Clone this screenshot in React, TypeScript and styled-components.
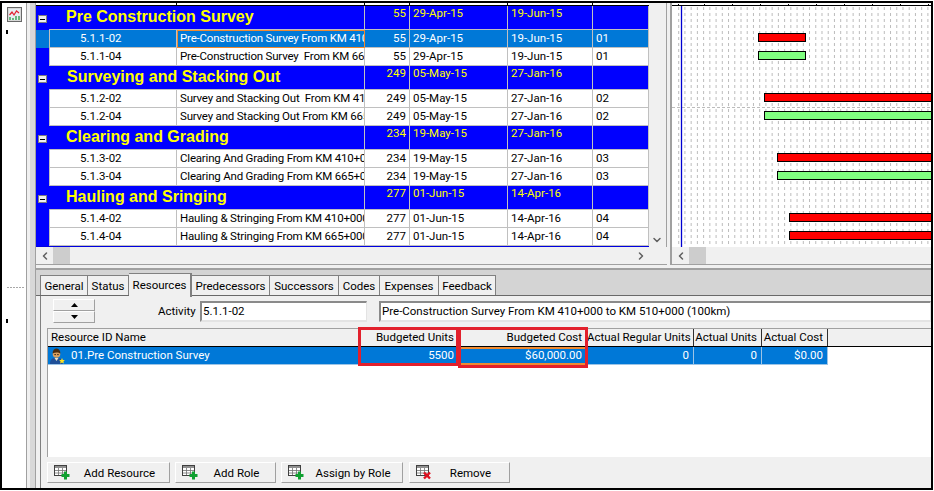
import React from 'react';
import styled, { createGlobalStyle } from 'styled-components';
import { ChevronDown, ChevronLeft, ChevronRight } from 'lucide-react';

const GlobalStyle = createGlobalStyle`
  html, body {
    margin: 0;
    padding: 0;
    background: #fff;
  }
  body {
    font-family: Roboto, "Liberation Sans", Arial, sans-serif;
    font-size: 11.5px;
    color: #000;
  }
  * { box-sizing: border-box; }
`;

const COLUMNS = '13px 128px 188px 45px 98px 85px 56px';
const RES_COLUMNS = '311px 100px 128px 107px 68px 66px 1fr';

const Frame = styled.div`
  display: flex;
  width: 933px;
  height: 489px;
  margin-top: 1px;
  border: 2px solid #000;
  overflow: hidden;
`;

const Rail = styled.div`
  position: relative;
  display: flex;
  flex-direction: column;
  width: 25px;
  border-right: 1px solid #a0a0a0;
  padding: 4px 0 0 5px;
`;

const RailMark = styled.div<{ $top: number }>`
  width: 2px;
  height: 4px;
  margin-top: ${(p) => p.$top}px;
  margin-left: -1px;
  background: #000;
`;

const RailDots = styled.div`
  width: 18px;
  height: 1px;
  margin-top: 253px;
  background: repeating-linear-gradient(90deg, #a8a8a8 0 2px, transparent 2px 3px);
`;

const Sash = styled.div`
  width: 9px;
  background: linear-gradient(90deg, #f0f0f0 0 3px, #d8d8d8 3px 8px, #a0a0a0 8px);
`;

const Main = styled.div`
  display: flex;
  flex-direction: column;
  width: 895px;
`;

const TopPane = styled.div`
  display: flex;
  height: 262px;
`;

const TablePane = styled.div`
  display: flex;
  flex-direction: column;
  width: 631px;
`;

const TableWrap = styled.div`
  display: flex;
  height: 244px;
`;

const Grid = styled.div`
  width: 613px;
`;

const TickStrip = styled.div`
  display: grid;
  grid-template-columns: ${COLUMNS};
  height: 3px;
  border-bottom: 1px solid #000;
  span { border-right: 1px solid #000; }
`;

const Row = styled.div<{ $group?: boolean; $selected?: boolean }>`
  display: grid;
  grid-template-columns: ${COLUMNS};
  height: ${(p) => (p.$group ? 24 : 18)}px;
  background: ${(p) => (p.$group ? '#0000ff' : p.$selected ? '#0078d7' : '#fff')};
  color: ${(p) => (p.$group ? '#ffff00' : p.$selected ? '#fff' : '#000')};
`;

const Gutter = styled.div<{ $selected?: boolean }>`
  background: ${(p) => (p.$selected ? '#0078d7' : '#0000ff')};
  border-right: 1px solid ${(p) => (p.$selected ? '#0078d7' : '#0000ff')};
`;

const GroupGutter = styled.div`
  position: relative;
  padding: 9px 0 0 2px;
`;

const Toggle = styled.div`
  display: flex;
  align-items: center;
  justify-content: center;
  width: 9px;
  height: 8px;
  background: #f0f0f0;
  border: 1px solid #808080;
  &::after {
    content: '';
    width: 5px;
    height: 1px;
    background: #000;
  }
`;

const GroupTitle = styled.div<{ $indent: number }>`
  grid-column: span 2;
  padding-left: ${(p) => p.$indent}px;
  font-family: "Liberation Sans", Arial, sans-serif;
  font-size: 16px;
  font-weight: 700;
  line-height: 21px;
  white-space: nowrap;
  border-right: 1px solid #c0c0c0;
  border-bottom: 1px solid #c0c0c0;
`;

const Cell = styled.div<{ $right?: boolean; $pad: number; $first?: boolean; $active?: boolean; $top?: boolean }>`
  height: 100%;
  overflow: hidden;
  white-space: pre;
  line-height: ${(p) => (p.$top ? '15px' : '17px')};
  text-align: ${(p) => (p.$right ? 'right' : 'left')};
  padding: ${(p) => (p.$right ? `0 ${p.$pad}px 0 0` : `0 0 0 ${p.$pad}px`)};
  border-right: 1px solid #c0c0c0;
  border-bottom: 1px solid #c0c0c0;
  border-left: ${(p) => (p.$first ? '1px solid #c0c0c0' : 'none')};
  ${(p) =>
    p.$active &&
    `
    outline: 1px solid #f08a30;
    outline-offset: -1px;
    padding-left: 3px;
    border-right-color: #f08a30;
    border-bottom-color: #f08a30;
  `}
`;

const NameCell = styled(Cell)`
  letter-spacing: -0.2px;
`;

const BlueEnd = styled.div`
  height: 1px;
  background: #0000e0;
`;

const VScroll = styled.div`
  display: flex;
  flex-direction: column;
  align-items: center;
  justify-content: flex-end;
  width: 18px;
  padding: 0 1px 1px 0;
  background: #f0f0f0;
  border-right: 1px solid #a0a0a0;
  color: #606060;
`;

const HScroll = styled.div<{ $inset?: number }>`
  display: flex;
  align-items: center;
  height: 18px;
  padding-right: ${(p) => p.$inset ?? 0}px;
  background: #f0f0f0;
  border-bottom: 1px solid #a0a0a0;
  color: #606060;
`;

const ArrowBox = styled.div`
  display: flex;
  align-items: center;
  justify-content: center;
  width: 17px;
  height: 17px;
`;

const Thumb = styled.div`
  width: 17px;
  height: 17px;
  background: #cdcdcd;
`;

const ScrollRest = styled.div`
  flex: 1;
`;

const Splitter = styled.div`
  width: 5px;
  background: linear-gradient(90deg, #f0f0f0 0 3px, #a0a0a0 3px);
`;

const GanttPane = styled.div`
  display: flex;
  flex-direction: column;
  width: 259px;
`;

const GanttChart = styled.svg`
  display: block;
  width: 259px;
  height: 244px;
`;

const Details = styled.div`
  display: flex;
  flex-direction: column;
  height: 223px;
  padding-top: 3px;
  background: #f0f0f0;
`;

const TabStrip = styled.div`
  display: flex;
  align-items: flex-end;
  height: 28px;
  padding-left: 4px;
  background: #d4d4d4;
  border-top: 2px solid #a0a0a0;
  border-bottom: 1px solid #696969;
`;

const Tab = styled.div<{ $width: number; $active?: boolean }>`
  position: relative;
  width: ${(p) => p.$width}px;
  height: ${(p) => (p.$active ? 24 : 20)}px;
  margin-bottom: ${(p) => (p.$active ? -2 : 0)}px;
  padding-top: ${(p) => (p.$active ? 4 : 3)}px;
  line-height: 14px;
  text-align: center;
  background: #f0f0f0;
  border-top: 1px solid #808080;
  border-right: ${(p) => (p.$active ? '2px solid #808080' : '1px solid #808080')};
  &:first-child { border-left: 1px solid #808080; }
`;

const Body = styled.div`
  display: flex;
  flex-direction: column;
  flex: 1;
  margin-left: 4px;
  padding-left: 6px;
  border-left: 1px solid #808080;
`;

const ActivityRow = styled.div`
  display: flex;
  align-items: center;
  height: 27px;
  padding-top: 3px;
`;

const Spinner = styled.div`
  display: flex;
  flex-direction: column;
  width: 42px;
  height: 24px;
  margin-left: 6px;
`;

const SpinButton = styled.div`
  display: flex;
  align-items: center;
  justify-content: center;
  flex: 1;
  background: #f0f0f0;
  border-top: 1px solid #fff;
  border-left: 1px solid #fff;
  border-right: 1px solid #a0a0a0;
  border-bottom: 1px solid #a0a0a0;
`;

const ActivityLabel = styled.label`
  margin-left: 63px;
  width: 42px;
  color: #000;
`;

const Field = styled.div<{ $width?: number; $gap: number }>`
  flex: ${(p) => (p.$width ? 'none' : 1)};
  width: ${(p) => (p.$width ? `${p.$width}px` : 'auto')};
  height: 21px;
  margin-top: 1px;
  margin-left: ${(p) => p.$gap}px;
  padding-left: 1px;
  line-height: 17px;
  white-space: nowrap;
  overflow: hidden;
  background: #fff;
  border-top: 2px solid #8a8a8a;
  border-left: 2px solid #8a8a8a;
  border-right: 1px solid #e3e3e3;
  border-bottom: 2px solid #e3e3e3;
`;

const ResTable = styled.div`
  position: relative;
  height: 129px;
  margin-top: 5px;
  background: #fff;
  border-top: 1px solid #a0a0a0;
  border-left: 1px solid #a0a0a0;
`;

const ResHeader = styled.div`
  display: grid;
  grid-template-columns: ${RES_COLUMNS};
  height: 18px;
  background: #f0f0f0;
  border-bottom: 1px solid #000;
`;

const ResHead = styled.div<{ $left?: boolean }>`
  padding: ${(p) => (p.$left ? '0 0 0 3px' : '0 4px 0 0')};
  line-height: 17px;
  text-align: ${(p) => (p.$left ? 'left' : 'right')};
  white-space: nowrap;
  border-right: 1px solid #303030;
`;

const HeadFill = styled.div`
  background: #f0f0f0;
`;

const ResRow = styled.div`
  display: grid;
  grid-template-columns: ${RES_COLUMNS};
  height: 18px;
  color: #fff;
`;

const ResCell = styled.div<{ $active?: boolean }>`
  padding-right: 4px;
  line-height: 17px;
  text-align: right;
  background: #0078d7;
  border-right: 1px solid #9cc4e6;
  border-bottom: 1px solid #9cc4e6;
  ${(p) => p.$active && 'outline: 2px solid #f08a30; outline-offset: -2px;'}
`;

const ResName = styled(ResCell)`
  display: flex;
  align-items: center;
  gap: 6px;
  padding-left: 2px;
  text-align: left;
`;

const Callout = styled.div<{ $left: number; $width: number; $height: number }>`
  position: absolute;
  top: -2px;
  left: ${(p) => p.$left}px;
  width: ${(p) => p.$width}px;
  height: ${(p) => p.$height}px;
  border: 3px solid #e2202c;
  pointer-events: none;
`;

const ButtonRow = styled.div`
  display: flex;
  padding-top: 5px;
`;

const ActionButton = styled.div<{ $width: number; $gap: number }>`
  display: flex;
  align-items: center;
  width: ${(p) => p.$width}px;
  height: 21px;
  margin-right: ${(p) => p.$gap}px;
  padding-left: 6px;
  background: #f0f0f0;
  border-top: 1px solid #fff;
  border-left: 1px solid #fff;
  border-right: 1px solid #a0a0a0;
  border-bottom: 1px solid #a0a0a0;
`;

const ActionLabel = styled.span`
  flex: 1;
  text-align: center;
`;

const ChartIcon = () => (
  <svg width="15" height="15" viewBox="0 0 15 15">
    <rect x="0.5" y="0.5" width="14" height="14" fill="#d8d8d8" stroke="#686868" />
    <rect x="2" y="2" width="11" height="11" fill="#e6edf2" />
    <path d="M2.5 8 5 5l2 3 2.5-4L12 6" fill="none" stroke="#e02030" strokeWidth="1.2" />
    <path d="M3 13v-3M6 13v-2M9 13V9M12 13v-4" stroke="#30a050" strokeWidth="1.4" />
  </svg>
);

const PersonIcon = () => (
  <svg width="15" height="16" viewBox="0 0 15 16">
    <path d="M0 16c0-5 2-6 6.5-6s6 1 6 6z" fill="#1f4f98" />
    <path d="M4.5 10h4l-2 3z" fill="#f0e0c0" />
    <circle cx="6.5" cy="6" r="3.8" fill="#d8a060" />
    <path d="M2.6 5.5C2.6 2 4.5 0.5 6.5 0.5s3.9 1.5 3.9 5C8.6 4 5 4 2.6 5.5z" fill="#4a2c10" />
    <path d="M4.4 6.6h1.5M7.2 6.6h1.5" stroke="#201008" strokeWidth="0.9" />
    <path d="M12 10l.9 1.9 2 .2-1.5 1.3.5 2-1.9-1-1.9 1 .5-2-1.5-1.3 2-.2z" fill="#ffe020" />
  </svg>
);

const TableIcon = ({ remove }: { remove?: boolean }) => (
  <svg width="16" height="15" viewBox="0 0 16 15">
    <rect x="0.5" y="0.5" width="12" height="10" fill="#fff" stroke="#404040" />
    <rect x="1" y="1" width="11" height="2" fill="#909090" />
    <path d="M1 5.5h11M1 8h11M4.5 3v7M8.5 3v7" stroke="#707070" strokeWidth="0.8" />
    {remove ? (
      <path d="M8 7.5l6 6M14 7.5l-6 6" stroke="#e01020" strokeWidth="2.4" />
    ) : (
      <path d="M11.5 6.5v8M7.5 10.5h8" stroke="#10a030" strokeWidth="3" />
    )}
  </svg>
);

type Activity = { id: string; name: string; dur: string; start: string; end: string; code: string; selected?: boolean };
type Group = { title: string; indent: number; dur: string; start: string; end: string; rows: Activity[] };

const groups: Group[] = [
  {
    title: 'Pre Construction Survey',
    indent: 17,
    dur: '55',
    start: '29-Apr-15',
    end: '19-Jun-15',
    rows: [
      { id: '5.1.1-02', name: 'Pre-Construction Survey From KM 410+000 to KM 510+000 (100km)', dur: '55', start: '29-Apr-15', end: '19-Jun-15', code: '01', selected: true },
      { id: '5.1.1-04', name: 'Pre-Construction Survey  From KM 665+000 to KM 765+000', dur: '55', start: '29-Apr-15', end: '19-Jun-15', code: '01' },
    ],
  },
  {
    title: 'Surveying and Stacking Out',
    indent: 18,
    dur: '249',
    start: '05-May-15',
    end: '27-Jan-16',
    rows: [
      { id: '5.1.2-02', name: 'Survey and Stacking Out  From KM 410+000 to KM 510+000', dur: '249', start: '05-May-15', end: '27-Jan-16', code: '02' },
      { id: '5.1.2-04', name: 'Survey and Stacking Out From KM 665+000 to KM 765+000', dur: '249', start: '05-May-15', end: '27-Jan-16', code: '02' },
    ],
  },
  {
    title: 'Clearing and Grading',
    indent: 17,
    dur: '234',
    start: '19-May-15',
    end: '27-Jan-16',
    rows: [
      { id: '5.1.3-02', name: 'Clearing And Grading From KM 410+000 to KM 510+000', dur: '234', start: '19-May-15', end: '27-Jan-16', code: '03' },
      { id: '5.1.3-04', name: 'Clearing And Grading From KM 665+000 to KM 765+000', dur: '234', start: '19-May-15', end: '27-Jan-16', code: '03' },
    ],
  },
  {
    title: 'Hauling and Sringing',
    indent: 17,
    dur: '277',
    start: '01-Jun-15',
    end: '14-Apr-16',
    rows: [
      { id: '5.1.4-02', name: 'Hauling & Stringing From KM 410+000 to KM 510+000', dur: '277', start: '01-Jun-15', end: '14-Apr-16', code: '04' },
      { id: '5.1.4-04', name: 'Hauling & Stringing From KM 665+000 to KM 765+000', dur: '277', start: '01-Jun-15', end: '14-Apr-16', code: '04' },
    ],
  },
];

const bars = [
  { x: 86.5, y: 30.5, w: 47, fill: '#ff0000' },
  { x: 86.5, y: 48.5, w: 47, fill: '#80ff80' },
  { x: 92.5, y: 90.5, w: 200, fill: '#ff0000' },
  { x: 92.5, y: 108.5, w: 200, fill: '#80ff80' },
  { x: 105.5, y: 150.5, w: 200, fill: '#ff0000' },
  { x: 105.5, y: 168.5, w: 200, fill: '#80ff80' },
  { x: 117.5, y: 210.5, w: 200, fill: '#ff0000' },
  { x: 117.5, y: 228.5, w: 200, fill: '#ff0000' },
];

const tabs = [
  { label: 'General', width: 48 },
  { label: 'Status', width: 41 },
  { label: 'Resources', width: 63, active: true },
  { label: 'Predecessors', width: 78 },
  { label: 'Successors', width: 69 },
  { label: 'Codes', width: 41 },
  { label: 'Expenses', width: 59 },
  { label: 'Feedback', width: 57 },
];

const actions = [
  { label: 'Add Resource', width: 123, gap: 5 },
  { label: 'Add Role', width: 101, gap: 5 },
  { label: 'Assign by Role', width: 122, gap: 6 },
  { label: 'Remove', width: 101, gap: 0, remove: true },
];

const dashColumns = Array.from({ length: 41 }, (_, i) => 6.7 + i * 6.23);
const ticks = [6, 32, 60, 88, 116, 144, 172, 200, 228, 256];

function Gantt() {
  return (
    <GanttChart viewBox="0 0 259 244">
      {dashColumns.map((x) => (
        <line key={x} x1={x} x2={x} y1="4" y2="244" stroke="#bcbcbc" strokeDasharray="3 3" />
      ))}
      <line x1="0" x2="259" y1="104.5" y2="104.5" stroke="#bcbcbc" strokeDasharray="3 2" />
      <line x1="9.5" x2="9.5" y1="3" y2="244" stroke="#0000d0" strokeWidth="1.3" />
      <line x1="0" x2="259" y1="2.5" y2="2.5" stroke="#000" />
      {ticks.map((x) => (
        <line key={x} x1={x + 0.5} x2={x + 0.5} y1="1" y2="3" stroke="#000" />
      ))}
      {bars.map((b) => (
        <rect key={b.y} x={b.x} y={b.y} width={b.w} height="8" fill={b.fill} stroke="#000" />
      ))}
    </GanttChart>
  );
}

export default function App() {
  return (
    <>
      <GlobalStyle />
      <Frame>
        <Rail>
          <ChartIcon />
          <RailMark $top={8} />
          <RailDots />
          <RailMark $top={31} />
        </Rail>
        <Sash />
        <Main>
          <TopPane>
            <TablePane>
              <TableWrap>
                <Grid>
                  <TickStrip>
                    <i />
                    <span />
                    <span />
                    <span />
                    <span />
                    <span />
                  </TickStrip>
                  {groups.map((g) => (
                    <React.Fragment key={g.title}>
                      <Row $group>
                        <GroupGutter>
                          <Toggle />
                        </GroupGutter>
                        <GroupTitle $indent={g.indent}>{g.title}</GroupTitle>
                        <Cell $right $pad={3} $top>{g.dur}</Cell>
                        <Cell $pad={3} $top>{g.start}</Cell>
                        <Cell $pad={3} $top>{g.end}</Cell>
                        <Cell $pad={3} />
                      </Row>
                      {g.rows.map((r) => (
                        <Row key={r.id} $selected={r.selected}>
                          <Gutter $selected={r.selected} />
                          <Cell $first $pad={30}>{r.id}</Cell>
                          <NameCell $pad={3} $active={r.selected}>{r.name}</NameCell>
                          <Cell $right $pad={3}>{r.dur}</Cell>
                          <Cell $pad={3}>{r.start}</Cell>
                          <Cell $pad={3}>{r.end}</Cell>
                          <Cell $pad={3}>{r.code}</Cell>
                        </Row>
                      ))}
                    </React.Fragment>
                  ))}
                  <BlueEnd />
                </Grid>
                <VScroll>
                  <ChevronDown size={12} strokeWidth={3} />
                </VScroll>
              </TableWrap>
              <HScroll $inset={18}>
                <ArrowBox><ChevronLeft size={12} strokeWidth={3} /></ArrowBox>
                <Thumb />
                <ScrollRest />
                <ArrowBox><ChevronRight size={12} strokeWidth={3} /></ArrowBox>
              </HScroll>
            </TablePane>
            <Splitter />
            <GanttPane>
              <Gantt />
              <HScroll>
                <ArrowBox><ChevronLeft size={12} strokeWidth={3} /></ArrowBox>
                <Thumb />
                <ScrollRest />
              </HScroll>
            </GanttPane>
          </TopPane>
          <Details>
            <TabStrip>
              {tabs.map((t) => (
                <Tab key={t.label} $width={t.width} $active={t.active}>{t.label}</Tab>
              ))}
            </TabStrip>
            <Body>
              <ActivityRow>
                <Spinner>
                  <SpinButton>
                    <svg width="7" height="4" viewBox="0 0 7 4"><path d="M3.5 0L7 4H0z" fill="#000" /></svg>
                  </SpinButton>
                  <SpinButton>
                    <svg width="7" height="4" viewBox="0 0 7 4"><path d="M0 0h7L3.5 4z" fill="#000" /></svg>
                  </SpinButton>
                </Spinner>
                <ActivityLabel>Activity</ActivityLabel>
                <Field $width={167} $gap={0}>5.1.1-02</Field>
                <Field $gap={12}>Pre-Construction Survey From KM 410+000 to KM 510+000 (100km)</Field>
              </ActivityRow>
              <ResTable>
                <ResHeader>
                  <ResHead $left>Resource ID Name</ResHead>
                  <ResHead>Budgeted Units</ResHead>
                  <ResHead>Budgeted Cost</ResHead>
                  <ResHead>Actual Regular Units</ResHead>
                  <ResHead>Actual Units</ResHead>
                  <ResHead>Actual Cost</ResHead>
                  <HeadFill />
                </ResHeader>
                <ResRow>
                  <ResName>
                    <PersonIcon />
                    01.Pre Construction Survey
                  </ResName>
                  <ResCell>5500</ResCell>
                  <ResCell $active>$60,000.00</ResCell>
                  <ResCell>0</ResCell>
                  <ResCell>0</ResCell>
                  <ResCell>$0.00</ResCell>
                </ResRow>
                <Callout $left={310} $width={101} $height={39} />
                <Callout $left={410} $width={130} $height={41} />
              </ResTable>
              <ButtonRow>
                {actions.map((a) => (
                  <ActionButton key={a.label} $width={a.width} $gap={a.gap}>
                    <TableIcon remove={a.remove} />
                    <ActionLabel>{a.label}</ActionLabel>
                  </ActionButton>
                ))}
              </ButtonRow>
            </Body>
          </Details>
        </Main>
      </Frame>
    </>
  );
}
